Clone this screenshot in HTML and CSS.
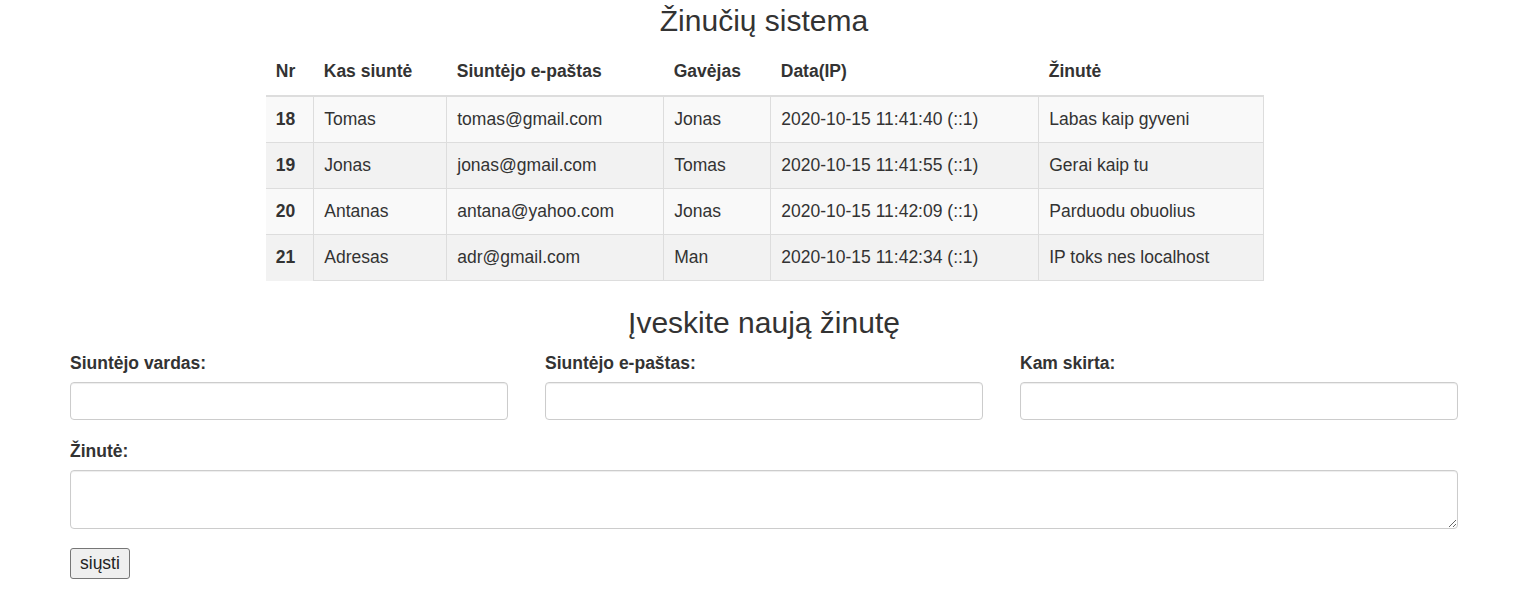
FILE: index.html
```html
<!DOCTYPE html>
<html lang="lt">
<head>
<meta charset="utf-8">
<title>Žinučių sistema</title>
<link rel="stylesheet" href="styles.css">
</head>
<body>
<div class="page">
  <h3 class="title">Žinučių sistema</h3>
  <table class="msgs">
    <colgroup>
      <col class="c-nr"><col class="c-who"><col class="c-mail"><col class="c-to"><col class="c-date"><col class="c-msg">
    </colgroup>
    <thead>
      <tr><th>Nr</th><th>Kas siuntė</th><th>Siuntėjo e-paštas</th><th>Gavėjas</th><th>Data(IP)</th><th>Žinutė</th></tr>
    </thead>
    <tbody>
      <tr><th>18</th><td>Tomas</td><td>tomas@gmail.com</td><td>Jonas</td><td>2020-10-15 11:41:40 (::1)</td><td>Labas kaip gyveni</td></tr>
      <tr><th>19</th><td>Jonas</td><td>jonas@gmail.com</td><td>Tomas</td><td>2020-10-15 11:41:55 (::1)</td><td>Gerai kaip tu</td></tr>
      <tr><th>20</th><td>Antanas</td><td>antana@yahoo.com</td><td>Jonas</td><td>2020-10-15 11:42:09 (::1)</td><td>Parduodu obuolius</td></tr>
      <tr><th>21</th><td>Adresas</td><td>adr@gmail.com</td><td>Man</td><td>2020-10-15 11:42:34 (::1)</td><td>IP toks nes localhost</td></tr>
    </tbody>
  </table>
  <h3 class="title sub">Įveskite naują žinutę</h3>
  <form class="form">
    <div class="row3">
      <div class="group">
        <label for="v">Siuntėjo vardas:</label>
        <input id="v" type="text" class="field">
      </div>
      <div class="group">
        <label for="e">Siuntėjo e-paštas:</label>
        <input id="e" type="text" class="field">
      </div>
      <div class="group">
        <label for="k">Kam skirta:</label>
        <input id="k" type="text" class="field">
      </div>
    </div>
    <div class="group">
      <label for="z">Žinutė:</label>
      <textarea id="z" class="field area"></textarea>
    </div>
    <button type="button" class="send">siųsti</button>
  </form>
</div>
</body>
</html>
```

FILE: styles.css
```css
* { box-sizing: border-box; }
html, body { margin: 0; padding: 0; background: #fff; }
body {
  font-family: "Liberation Sans", Arial, Helvetica, sans-serif;
  font-size: 17.5px;
  line-height: 25px;
  color: #333;
}
.page {
  padding-left: 6px;
  display: flex;
  flex-direction: column;
  align-items: center;
}
.title {
  margin: 4px 0 12px;
  font-size: 30px;
  line-height: 33px;
  font-weight: 400;
  text-align: center;
}
.title.sub { margin: 0 0 12px; }
.msgs {
  width: 998px;
  border-collapse: collapse;
  table-layout: fixed;
  margin: 0 0 25px 2px;
}
.c-nr { width: 48px; }
.c-who { width: 133px; }
.c-mail { width: 217px; }
.c-to { width: 107px; }
.c-date { width: 268px; }
.c-msg { width: 225px; }
.msgs th, .msgs td {
  padding: 10px;
  text-align: left;
  vertical-align: top;
  white-space: nowrap;
}
.msgs thead th {
  font-weight: 700;
  border-bottom: 2px solid #ddd;
  padding-bottom: 11px;
}
.msgs tbody th {
  font-weight: 700;
  border-top: 1px solid #ddd;
}
.msgs tbody td {
  border: 1px solid #ddd;
}
.msgs tbody tr:nth-child(odd) { background: #f9f9f9; }
.msgs tbody tr:nth-child(even) { background: #f2f2f2; }
.form {
  width: 1388px;
  display: flex;
  flex-direction: column;
  align-items: flex-start;
}
.row3 {
  width: 100%;
  display: grid;
  grid-template-columns: repeat(3, 1fr);
  column-gap: 37px;
}
.group {
  width: 100%;
  display: flex;
  flex-direction: column;
  margin-bottom: 19px;
}
.group label {
  font-weight: 700;
  margin-bottom: 6px;
  line-height: 25px;
}
.field {
  width: 100%;
  height: 38px;
  border: 1px solid #ccc;
  border-radius: 4px;
  box-shadow: inset 0 1px 1px rgba(0,0,0,.075);
  background: #fff;
  font-family: inherit;
  font-size: 17.5px;
  padding: 6px 12px;
  color: #555;
}
.area {
  height: 59px;
  resize: vertical;
  display: block;
}
.send {
  margin-top: 0;
  height: 31px;
  padding: 0 9px;
  font-family: inherit;
  font-size: 17.5px;
  line-height: 25px;
  color: #222;
  background: #efefef;
  border: 1px solid #767676;
  border-radius: 3px;
}
```
